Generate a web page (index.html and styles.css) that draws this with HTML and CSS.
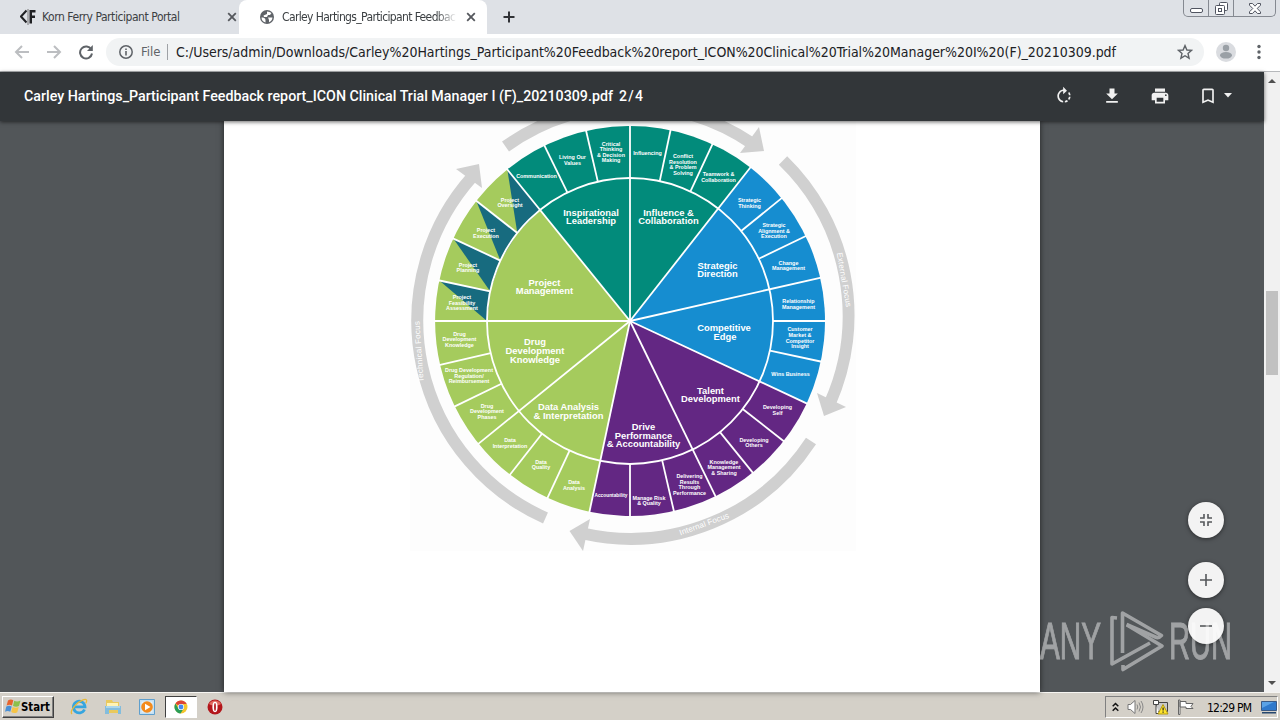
FILE: index.html
```
<!DOCTYPE html>
<html lang="en">
<head>
    <meta charset="UTF-8">
    <meta name="viewport" content="width=device-width, initial-scale=1.0">
    <title>Carley Hartings_Participant Feedback report</title>
    <link rel="stylesheet" href="styles.css">
</head>
<body>

<div class="tab-strip">
    <div class="tab">
        <svg class="tab-icon" width="16" height="16" viewBox="0 0 16 16"><path d="M6.5 1.5 1 7.5l5.5 6" fill="none" stroke="#202124" stroke-width="2"/><path d="M7.5 0h1v16h-1z" fill="#777"/><path d="M9.500 1h6v2.500h-3.500v3h3v2.500h-3v5.500h-2.500z" fill="#202124"/></svg>
        <span class="tab-title"><svg class="label" width="140" height="18"><text x="0" y="13" textLength="138">Korn Ferry Participant Portal</text></svg></span>
        <svg class="tab-close" width="10" height="10" viewBox="0 0 10 10"><path d="M1.200 1.200l7.600 7.600M8.800 1.200 1.200 8.800"/></svg>
    </div>
    <div class="tab active">
        <svg class="tab-icon" width="16" height="16" viewBox="0 0 16 16"><circle cx="8" cy="8" r="7" fill="#5f6368"/><path d="M2.500 8.500c2 0 4 .5 4 2.500v2.500C4 12.800 2.500 11 2.500 8.500zM8 2.500c2 0 3 1 4.500 1.500L11 6H9L8 8H5L4.500 6.500 8 5zM9 8.500h4.500C13.300 11 12 12.500 10 13.200V11z" fill="#fff"/></svg>
        <span class="tab-title fade"><svg class="label" width="176" height="18"><text x="1" y="13" textLength="174">Carley Hartings_Participant Feedbac</text></svg></span>
        <svg class="tab-close" width="10" height="10" viewBox="0 0 10 10"><path d="M1.200 1.200l7.600 7.600M8.800 1.200 1.200 8.800"/></svg>
    </div>
    <svg class="new-tab" width="12" height="12" viewBox="0 0 12 12"><path d="M6 .5v11M.5 6h11" stroke="#303236" stroke-width="2"/></svg>
    <div class="window-buttons">
        <span class="min"><svg width="13" height="5" viewBox="0 0 13 5"><rect x=".5" y=".5" width="12" height="4" rx="1.500" fill="#fff" stroke="#505460"/></svg></span>
        <span class="max"><svg width="13" height="13" viewBox="0 0 13 13" fill="#fff" stroke="#505460"><rect x="4.500" y=".5" width="8" height="8" rx="1"/><rect x=".5" y="3.500" width="9" height="9" rx="1"/><rect x="3.500" y="6.500" width="3" height="3"/></svg></span>
        <span class="close"><svg width="12" height="11" viewBox="0 0 12 11"><path d="M.5.5h3L6 3.200 8.500.5h3v1.700L8.200 5.500l3.300 3.300v1.700h-3L6 7.800 3.500 10.500h-3V8.800l3.300-3.300L.5 2.200z" fill="#fff" stroke="#505460"/></svg></span>
    </div>
</div>

<div class="toolbar">
    <svg class="nav off" width="16" height="16" viewBox="0 0 16 16"><path d="M15 8H2M8 2 2 8l6 6"/></svg>
    <svg class="nav off" width="16" height="16" viewBox="0 0 16 16"><path d="M1 8h13M8 2l6 6-6 6"/></svg>
    <svg class="nav" width="16" height="16" viewBox="0 0 16 16"><path d="M13.300 5.500A6 6 0 1 0 14 9.500"/><path d="M14.800 1v6H9z" fill="#5f6368" stroke="none"/></svg>
    <div class="address-bar">
        <svg class="info" width="14" height="14" viewBox="0 0 14 14"><circle cx="7" cy="7" r="6.200" fill="none" stroke="#5f6368" stroke-width="1.500"/><path d="M6.200 6h1.600v4.500H6.200zM6.200 3.400h1.600v1.500H6.200z" fill="#5f6368"/></svg>
        <span class="scheme">File</span>
        <svg class="label url" width="942" height="22"><text x="0" y="16" textLength="940">C:/Users/admin/Downloads/Carley%20Hartings_Participant%20Feedback%20report_ICON%20Clinical%20Trial%20Manager%20I%20(F)_20210309.pdf</text></svg>
        <svg class="star" width="16" height="16" viewBox="0 0 16 16"><path d="M8 1.600l1.900 4.400 4.700.4-3.600 3.100 1.100 4.700L8 11.700l-4.100 2.500L5 9.500 1.400 6.400 6.100 6z" fill="none" stroke="#5f6368" stroke-width="1.400"/></svg>
    </div>
    <svg class="avatar" width="20" height="20" viewBox="0 0 20 20"><circle cx="10" cy="10" r="10" fill="#dadce0"/><circle cx="10" cy="6" r="3.200" fill="#9aa0a6"/><ellipse cx="10" cy="13.300" rx="6" ry="3.300" fill="#9aa0a6"/></svg>
    <svg class="dots" width="4" height="16" viewBox="0 0 4 16" fill="#5f6368"><circle cx="2" cy="2.500" r="1.700"/><circle cx="2" cy="8" r="1.700"/><circle cx="2" cy="13.500" r="1.700"/></svg>
</div>

<div class="viewer">
    <div class="document">
        <div class="pdf-bar">
            <svg class="pdf-title" width="622" height="24"><text x="0" y="17" textLength="589" lengthAdjust="spacingAndGlyphs">Carley Hartings_Participant Feedback report_ICON Clinical Trial Manager I (F)_20210309.pdf</text><text x="595" y="17" textLength="24">2 / 4</text></svg>
            <div class="pdf-tools">
                <svg width="20" height="20" viewBox="0 0 24 24"><path d="M15.550 5.550 11 1v3.070C7.060 4.560 4 7.920 4 12s3.050 7.440 7 7.930v-2.020c-2.840-.48-5-2.940-5-5.910s2.160-5.430 5-5.910V10zM19.930 11c-.17-1.390-.72-2.730-1.620-3.890l-1.420 1.420c.54.75.88 1.600 1.020 2.470zM13 17.900v2.020c1.390-.17 2.740-.71 3.900-1.610l-1.440-1.440c-.75.54-1.590.89-2.460 1.030zm3.890-2.420 1.420 1.410c.9-1.160 1.450-2.500 1.620-3.890h-2.020c-.14.87-.48 1.720-1.020 2.480z"/></svg>
                <svg width="20" height="20" viewBox="0 0 24 24"><path d="M19 9h-4V3H9v6H5l7 7zM5 18v2h14v-2z"/></svg>
                <svg width="20" height="20" viewBox="0 0 24 24"><path d="M19 8H5c-1.660 0-3 1.340-3 3v6h4v4h12v-4h4v-6c0-1.660-1.340-3-3-3zm-3 11H8v-5h8zm3-7a1 1 0 1 1 0-2 1 1 0 0 1 0 2zM18 3H6v4h12z"/></svg>
                <span class="bookmark">
                    <svg width="20" height="20" viewBox="0 0 24 24"><path d="M17 3H7c-1.100 0-2 .9-2 2v16l7-3 7 3V5c0-1.100-.9-2-2-2zm0 15-5-2.180L7 18V5h10z"/></svg>
                    <svg width="8" height="5" viewBox="0 0 8 5"><path d="M0 0h8L4 4.500z"/></svg>
                </span>
            </div>
        </div>

        <div class="page">
            <svg class="wheel" width="446" height="430" viewBox="410 121 446 430">
                <!-- outer focus arrows -->
                <g fill="none" stroke="#d0d0d0" stroke-width="12">
                    <path d="M505.500 146.500A216 216 0 0 1 753 144"/>
                    <path d="M783 160.500A216 216 0 0 1 830 403"/>
                    <path d="M811 441A216 216 0 0 1 583 533.500"/>
                    <path d="M545.500 518A216 216 0 0 1 472 177"/>
                </g>
                <g fill="#d0d0d0">
                    <path d="M759 127l5 24-24 2z"/>
                    <path d="M817 393l7 23 22-9z"/>
                    <path d="M590 519l-20.500 12L583 551z"/>
                    <path d="M479 164l-23 5 26 19z"/>
                </g>
                <g class="focus">
                    <text text-anchor="middle" textLength="55" transform="translate(841.500 280) rotate(80)">External Focus</text>
                    <text text-anchor="middle" textLength="52" transform="translate(705 526.500) rotate(-20)">Internal Focus</text>
                    <text text-anchor="middle" textLength="61" transform="translate(421.500 351.500) rotate(-94)">Technical Focus</text>
                </g>

                <g transform="translate(630 321)">
                    <path fill="#028b7b" d="M0 0-122.700-151.500A195 195 0 0 1 120.300-153.500z"/>
                    <path fill="#168dd0" d="M0 0 120.300-153.500A195 195 0 0 1 176.700 82.400z"/>
                    <path fill="#632783" d="M0 0 176.700 82.400A195 195 0 0 1-40.500 190.700z"/>
                    <path fill="#a5cb5d" d="M0 0-40.500 190.700A195 195 0 0 1-122.700-151.500z"/>
                    <g fill="#176b7f">
                        <path transform="rotate(270)" d="M0-143l29.700 3.100 10.800-50.800z"/>
                        <path transform="rotate(282)" d="M0-143l32.200 3.700 11.700-50.700z"/>
                        <path transform="rotate(295)" d="M0-143l32.200 3.700 11.700-50.700z"/>
                        <path transform="rotate(308)" d="M0-143l32.200 3.700 11.700-50.700z"/>
                    </g>
                    <g stroke="#fff" stroke-width="1.800" fill="none">
                        <circle r="143"/>
                        <path d="M0 0v-196"/>
                        <path d="M0 0v-196" transform="rotate(38.100)"/>
                        <path d="M0 0v-196" transform="rotate(77.200)"/>
                        <path d="M0 0v-196" transform="rotate(115)"/>
                        <path d="M0 0v-196" transform="rotate(154)"/>
                        <path d="M0 0v-196" transform="rotate(192)"/>
                        <path d="M0 0v-196" transform="rotate(231)"/>
                        <path d="M0 0v-196" transform="rotate(270)"/>
                        <path d="M0 0v-196" transform="rotate(321)"/>
                        <path d="M0-143v-53" transform="rotate(12)"/>
                        <path d="M0-143v-53" transform="rotate(25)"/>
                        <path d="M0-143v-53" transform="rotate(51)"/>
                        <path d="M0-143v-53" transform="rotate(64.200)"/>
                        <path d="M0-143v-53" transform="rotate(90)"/>
                        <path d="M0-143v-53" transform="rotate(102)"/>
                        <path d="M0-143v-53" transform="rotate(128)"/>
                        <path d="M0-143v-53" transform="rotate(141)"/>
                        <path d="M0-143v-53" transform="rotate(167)"/>
                        <path d="M0-143v-53" transform="rotate(180)"/>
                        <path d="M0-143v-53" transform="rotate(205)"/>
                        <path d="M0-143v-53" transform="rotate(218)"/>
                        <path d="M0-143v-53" transform="rotate(244)"/>
                        <path d="M0-143v-53" transform="rotate(257)"/>
                        <path d="M0-143v-53" transform="rotate(282)"/>
                        <path d="M0-143v-53" transform="rotate(295)"/>
                        <path d="M0-143v-53" transform="rotate(308)"/>
                        <path d="M0-143v-53" transform="rotate(334)"/>
                        <path d="M0-143v-53" transform="rotate(347)"/>
                    </g>
                </g>

                <g class="group">
                    <text x="591" y="215.500">Inspirational</text><text x="591" y="224.300">Leadership</text>
                    <text x="668.500" y="215.500">Influence &amp;</text><text x="668.500" y="224.300">Collaboration</text>
                    <text x="717.500" y="268.500">Strategic</text><text x="717.500" y="277.300">Direction</text>
                    <text x="724" y="330.500">Competitive</text><text x="725" y="339.500">Edge</text>
                    <text x="710.500" y="393.500">Talent</text><text x="710.500" y="402.300">Development</text>
                    <text x="643.500" y="430">Drive</text><text x="643.500" y="438.700">Performance</text><text x="643.500" y="447.300">&amp; Accountability</text>
                    <text x="568.500" y="410">Data Analysis</text><text x="568.500" y="418.700">&amp; Interpretation</text>
                    <text x="535" y="344.500">Drug</text><text x="535" y="353.500">Development</text><text x="535" y="362.500">Knowledge</text>
                    <text x="544.500" y="285.500">Project</text><text x="544.500" y="294">Management</text>
                </g>
                <g class="skill">
                    <text x="536.500" y="178">Communication</text>
                    <text x="572.500" y="159">Living Our</text><text x="572.500" y="164.600">Values</text>
                    <text x="611" y="145.700">Critical</text><text x="611" y="151.200">Thinking</text><text x="611" y="156.700">&amp; Decision</text><text x="611" y="162.200">Making</text>
                    <text x="647.500" y="154.500">Influencing</text>
                    <text x="683" y="158">Conflict</text><text x="683" y="163.500">Resolution</text><text x="683" y="169">&amp; Problem</text><text x="683" y="174.500">Solving</text>
                    <text x="718.500" y="176">Teamwork &amp;</text><text x="718.500" y="181.700">Collaboration</text>
                    <text x="749.500" y="202">Strategic</text><text x="749.500" y="207.500">Thinking</text>
                    <text x="774" y="227.300">Strategic</text><text x="774" y="232.800">Alignment &amp;</text><text x="774" y="238.300">Execution</text>
                    <text x="788.500" y="264.700">Change</text><text x="788.500" y="270.300">Management</text>
                    <text x="798.500" y="303.300">Relationship</text><text x="798.500" y="308.800">Management</text>
                    <text x="800" y="331.300">Customer</text><text x="800" y="337">Market &amp;</text><text x="800" y="342.600">Competitor</text><text x="800" y="348.200">Insight</text>
                    <text x="790.500" y="376">Wins Business</text>
                    <text x="777.500" y="409">Developing</text><text x="777.500" y="414.500">Self</text>
                    <text x="754" y="441.500">Developing</text><text x="754" y="447">Others</text>
                    <text x="724" y="463.500">Knowledge</text><text x="724" y="469">Management</text><text x="724" y="474.500">&amp; Sharing</text>
                    <text x="689.500" y="478">Delivering</text><text x="689.500" y="483.700">Results</text><text x="689.500" y="489.300">Through</text><text x="689.500" y="494.800">Performance</text>
                    <text x="649" y="499.500">Manage Risk</text><text x="649" y="505">&amp; Quality</text>
                    <text x="611" y="496.500" textLength="33" lengthAdjust="spacingAndGlyphs">Accountability</text>
                    <text x="574" y="484">Data</text><text x="574" y="489.500">Analysis</text>
                    <text x="541" y="463.500">Data</text><text x="541" y="469">Quality</text>
                    <text x="510" y="442.300">Data</text><text x="510" y="447.800">Interpretation</text>
                    <text x="487" y="407.500">Drug</text><text x="487" y="413">Development</text><text x="487" y="418.500">Phases</text>
                    <text x="469" y="372.300">Drug Development</text><text x="469" y="377.800">Regulation/</text><text x="469" y="383.300">Reimbursement</text>
                    <text x="459.500" y="335.500">Drug</text><text x="459.500" y="341">Development</text><text x="459.500" y="346.500">Knowledge</text>
                    <text x="462" y="299">Project</text><text x="462" y="304.500">Feasibility</text><text x="462" y="310">Assessment</text>
                    <text x="468" y="266.500">Project</text><text x="468" y="272">Planning</text>
                    <text x="486" y="232">Project</text><text x="486" y="237.500">Execution</text>
                    <text x="510" y="201.500">Project</text><text x="510" y="207">Oversight</text>
                </g>
            </svg>
        </div>

        <div class="zoom-buttons">
            <span class="fab fit"><svg width="12" height="12" viewBox="0 0 12 12"><path d="M0 4h4V0M8 0v4h4M0 8h4v4M12 8H8v4"/></svg></span>
            <span class="fab"><svg width="12" height="12" viewBox="0 0 12 12"><path d="M6 0v12M0 6h12"/></svg></span>
            <span class="fab"><svg width="12" height="12" viewBox="0 0 12 12"><path d="M0 6h12"/></svg></span>
        </div>
    </div>

    <div class="scrollbar">
        <svg width="8" height="4" viewBox="0 0 8 4"><path d="M0 4h8L4 0z"/></svg>
        <div class="thumb"></div>
        <svg width="8" height="4" viewBox="0 0 8 4"><path d="M0 0h8L4 4z"/></svg>
    </div>
</div>

<svg class="watermark" width="204" height="70" viewBox="1036 606 204 70">
    <text x="1040" y="659" textLength="61" lengthAdjust="spacingAndGlyphs">ANY</text>
    <text x="1169" y="659" textLength="63" lengthAdjust="spacingAndGlyphs">RUN</text>
    <g fill="none" stroke="#fff" stroke-width="3.600" stroke-linejoin="round">
        <path d="M1117 618l-5-.5v46.500l38-21"/>
        <path d="M1122.500 653v-40l39 22.500q-2 2.500-5 2l-30-13"/>
        <path d="M1127 625l35 21-39 23.500v-4.500"/>
    </g>
</svg>

<div class="taskbar">
    <div class="start">
        <svg width="17" height="17" viewBox="0 0 17 17"><path d="M3 2.500c2-1.300 3.700-1.200 5.300-.2L7 7.500c-1.800-1-3.400-1-5.400 0z" fill="#e8642d"/><path d="M9.200 2.800c2 1.100 4 1 6.300-.2L14 8c-2 1.100-4 1-6 0z" fill="#8cc04b"/><path d="M1.300 8.600c2-1 3.600-1 5.400 0l-1.400 5.200c-1.800-1-3.400-1-5.300 0z" fill="#4a90d6"/><path d="M7.600 9c2 1 4 1 6.100 0l-1.400 5.200c-2.300 1.200-4.100 1.100-6.100-.1z" fill="#f6c445"/></svg>
        <svg class="start-text" width="31" height="16"><text x="0" y="12" textLength="29" lengthAdjust="spacingAndGlyphs">Start</text></svg>
    </div>
    <div class="quick-launch">
        <span class="launch"><svg width="18" height="18" viewBox="0 0 18 18"><path d="M14.500 11.500A5.800 5.800 0 1 1 15 8.800H5" fill="none" stroke="#35a5df" stroke-width="2.800"/><path d="M2 16C-1 13 7 4 13 1.800c4-1.300 4.300.8 2.800 3.400" fill="none" stroke="#e8b938" stroke-width="1.300"/></svg></span>
        <span class="launch"><svg width="18" height="18" viewBox="0 0 18 18"><path d="M2 2h6l1 2h6v11H2z" fill="#e9c95d"/><path d="M3 5h11v4H3z" fill="#fff3b5"/><path d="M1 8h16v8h-3v-4H5v4H1z" fill="#83bddd"/><path d="M2 9h14" stroke="#d4eef8"/></svg></span>
        <span class="launch"><svg width="16" height="16" viewBox="0 0 16 16"><path d="M.5.500h15v15H.500z" fill="#c4e0f3" stroke="#5f9fcd"/><path d="M2.500 2.500h11v11h-11z" fill="#e3f1fa"/><circle cx="8" cy="8" r="5.800" fill="#f38b1e"/><path d="M6 4.800 11.500 8 6 11.200z" fill="#fff"/></svg></span>
        <span class="launch pressed"><svg width="14" height="14" viewBox="0 0 14 14"><circle cx="7" cy="7" r="6.500" fill="#f5c52d"/><path d="M7 7 1.400 3.600A6.500 6.500 0 0 1 12.700 3.900H7z" fill="#dd4437"/><path d="M1.400 3.600A6.500 6.500 0 0 0 6.500 13.500L9.600 8.700 4.200 8.300z" fill="#299d58"/><circle cx="7" cy="7" r="3.100" fill="#fff"/><circle cx="7" cy="7" r="2.400" fill="#4688f1"/></svg></span>
        <span class="launch"><svg width="16" height="16" viewBox="0 0 16 16"><circle cx="8" cy="8" r="7.500" fill="#b3161b"/><path d="M2 5a7 7 0 0 1 12 0C11 7 5 7 2 5z" fill="#e26a60"/><ellipse cx="8" cy="8" rx="2.600" ry="5.200" fill="#fff"/><ellipse cx="8" cy="8" rx=".9" ry="4" fill="#b3161b"/></svg></span>
    </div>
    <div class="tray">
        <svg width="7" height="10" viewBox="0 0 7 10"><path d="M.7 4.300 3.500 1.500l2.800 2.800M.7 8.800 3.500 6l2.800 2.800" fill="none" stroke="#111" stroke-width="1.500"/></svg>
        <svg width="17" height="16" viewBox="0 0 17 16"><path d="M1 5.500h2.500L8 1.500v13l-4.500-4H1z" fill="#fff" stroke="#777"/><path d="M10 5.500q1.500 2.500 0 5M12 3.500q3 4.500 0 9M14 2q4 6 0 12" fill="none" stroke="#888"/></svg>
        <svg width="17" height="16" viewBox="0 0 17 16"><path d="M4.500 3.500h11v9h-11z" fill="#c9c9c9" stroke="#444"/><path d="M1.500 1.500h5v4h-5zM4 5.500v9h3" fill="#fff" stroke="#444"/><path d="M11 5.500l5 9.500H6z" fill="#ffe52b" stroke="#b49a10"/><path d="M10.500 8.500h1.200v3h-1.200zM10.500 12.500h1.200v1.200h-1.200z" fill="#222"/></svg>
        <svg width="17" height="16" viewBox="0 0 17 16"><path d="M1.500 1v14.500h1.500V1zM3 2.500h6v2h7l-2 3 2 2H9v-1.500H3z" fill="#fff" stroke="#666"/></svg>
        <svg class="clock" width="46" height="16"><text x="0" y="13" textLength="45">12:29 PM</text></svg>
        <svg class="desktop" width="16" height="14" viewBox="0 0 16 14"><path d="M.5 1.500h15v9H.500z" fill="#2f79cc" stroke="#3a5a86"/><path d="M1 2h12L1 8z" fill="#5aa2e6"/><path d="M1 12h14v1.500H1z" fill="#26476e"/></svg>
    </div>
</div>

</body>
</html>
```
FILE: styles.css
```
* {
    box-sizing: border-box;
}

body {
    font-family: 'DejaVu Sans Condensed', 'DejaVu Sans', sans-serif;
    margin: 0;
    width: 1280px;
    height: 720px;
    display: flex;
    flex-direction: column;
    overflow: hidden;
    background-color: #fff;
}

svg {
    display: block;
    flex-shrink: 0;
}

/* tabs */
.tab-strip {
    height: 34px;
    background-color: #dee1e6;
    display: flex;
    align-items: center;
}

.tab {
    width: 239px;
    height: 34px;
    padding: 0 0 0 20px;
    display: flex;
    align-items: center;
}

.tab.active {
    width: 248px;
    background-color: #fff;
    border-radius: 8px 8px 0 0;
}

.tab-icon {
    margin-right: 6px;
}

.tab-title {
    width: 176px;
    margin-right: 9px;
}

.tab-title.fade {
    -webkit-mask-image: linear-gradient(to right, #000 88%, transparent);
    mask-image: linear-gradient(to right, #000 88%, transparent);
}

.label {
    font-size: 12px;
    fill: #3c4043;
}

.tab-close {
    fill: none;
    stroke: #55585d;
    stroke-width: 1.8;
}

.new-tab {
    margin-left: 16px;
}

.window-buttons {
    display: flex;
    align-self: flex-start;
    margin-left: auto;
    margin-right: 4px;
    width: 93px;
    height: 17px;
    border: 1px solid #858991;
    border-top: none;
    border-radius: 0 0 5px 5px;
}

.window-buttons span {
    display: flex;
    justify-content: center;
    align-items: center;
    border-right: 1px solid #858991;
}

.window-buttons .min {
    width: 25px;
    padding-top: 4px;
}

.window-buttons .max {
    width: 25px;
}

.window-buttons .close {
    flex: 1;
    border-right: none;
}

/* address row */
.toolbar {
    height: 38px;
    border-bottom: 1px solid #b6b8bb;
    padding: 0 19px 2px 14px;
    display: flex;
    align-items: center;
}

.nav {
    margin-right: 16px;
    fill: none;
    stroke: #5f6368;
    stroke-width: 2;
}

.nav.off {
    stroke: #bcbec1;
}

.address-bar {
    width: 1098px;
    height: 28px;
    margin-left: -4px;
    padding: 0 11px 0 13px;
    border-radius: 14px;
    background-color: #f1f3f4;
    display: flex;
    align-items: center;
}

.scheme {
    font-size: 13px;
    color: #5f6368;
    margin-left: 8px;
    width: 27px;
    height: 16px;
    line-height: 16px;
    border-right: 1px solid #9fa2a6;
}

.url {
    margin-left: 8px;
    font-size: 14px;
    fill: #202124;
}

.star {
    margin-left: auto;
}

.avatar {
    margin-left: 12px;
}

.dots {
    margin-left: auto;
}

/* pdf viewer */
.viewer {
    height: 620px;
    display: flex;
}

.document {
    position: relative;
    width: 1264px;
    background-color: #525659;
    display: flex;
    flex-direction: column;
    align-items: center;
}

.pdf-bar {
    position: relative;
    z-index: 1;
    width: 100%;
    height: 49px;
    padding: 0 32px 2px 24px;
    background-color: #323639;
    box-shadow: 0 1px 4px rgba(0, 0, 0, 0.6);
    display: flex;
    align-items: center;
    justify-content: space-between;
}

.pdf-title {
    font-family: Roboto, sans-serif;
    font-size: 14px;
    font-weight: 500;
    fill: #fff;
}

.pdf-tools {
    display: flex;
    gap: 28px;
    fill: #f1f1f1;
}

.bookmark {
    display: flex;
    align-items: center;
    gap: 6px;
}

.page {
    width: 816px;
    flex: 1;
    padding-left: 186px;
    background-color: #fff;
    box-shadow: 0 0 6px rgba(0, 0, 0, 0.6);
}

.wheel {
    background-color: #fdfdfd;
    font-family: 'Liberation Sans', Arial, sans-serif;
}

.wheel text {
    fill: #fff;
}

.group {
    font-size: 9.4px;
    font-weight: bold;
    text-anchor: middle;
}

.skill {
    font-size: 5.4px;
    font-weight: bold;
    text-anchor: middle;
}

.focus {
    font-size: 8px;
}

.zoom-buttons {
    position: absolute;
    z-index: 2;
    right: 40px;
    top: 430px;
}

.fab {
    width: 36px;
    height: 36px;
    margin-bottom: 10px;
    border-radius: 50%;
    background-color: #f3f3f3;
    box-shadow: 0 1px 4px rgba(0, 0, 0, 0.5);
    display: flex;
    align-items: center;
    justify-content: center;
}

.fab.fit {
    margin-bottom: 24px;
}

.fab svg {
    fill: none;
    stroke: #55585b;
    stroke-width: 1.6;
}

.scrollbar {
    width: 16px;
    padding: 7px 0;
    background-color: #f1f1f1;
    display: flex;
    flex-direction: column;
    justify-content: space-between;
    align-items: center;
    fill: #505050;
}

.thumb {
    width: 12px;
    height: 84px;
    margin-top: -98px;
    background-color: #c1c1c1;
}

.watermark {
    position: absolute;
    z-index: 5;
    left: 1036px;
    top: 606px;
    opacity: 0.45;
    font-family: 'Liberation Sans', sans-serif;
    font-size: 51px;
    fill: #fff;
}

.watermark text {
    stroke: #fff;
    stroke-width: 1;
}

/* taskbar */
.taskbar {
    height: 28px;
    padding: 1px 2px;
    background-color: #d4d0c8;
    border-top: 1px solid #f6f5f2;
    display: flex;
    align-items: center;
}

.start {
    width: 52px;
    height: 22px;
    padding-left: 2px;
    border: 1px solid;
    border-color: #fff #404040 #404040 #fff;
    box-shadow: inset -1px -1px 0 #808080;
    display: flex;
    align-items: center;
}

.start-text {
    font-family: 'DejaVu Sans Condensed', sans-serif;
    font-size: 12px;
    font-weight: bold;
    margin-left: -1px;
}

.quick-launch {
    display: flex;
    margin-left: 9px;
    gap: 2px;
}

.launch {
    width: 32px;
    height: 22px;
    display: flex;
    align-items: center;
    justify-content: center;
}

.launch.pressed {
    background-color: #fff;
    border: 1px solid;
    border-color: #404040 #fff #fff #404040;
}

.tray {
    width: 173px;
    height: 22px;
    margin-left: auto;
    padding-left: 6px;
    border: 1px solid;
    border-color: #808080 #fff #fff #808080;
    display: flex;
    align-items: center;
}

.tray svg {
    margin-right: 8px;
}

.clock {
    margin-left: 5px;
    font-size: 12px;
}

.tray .desktop {
    margin: 0;
}
```
